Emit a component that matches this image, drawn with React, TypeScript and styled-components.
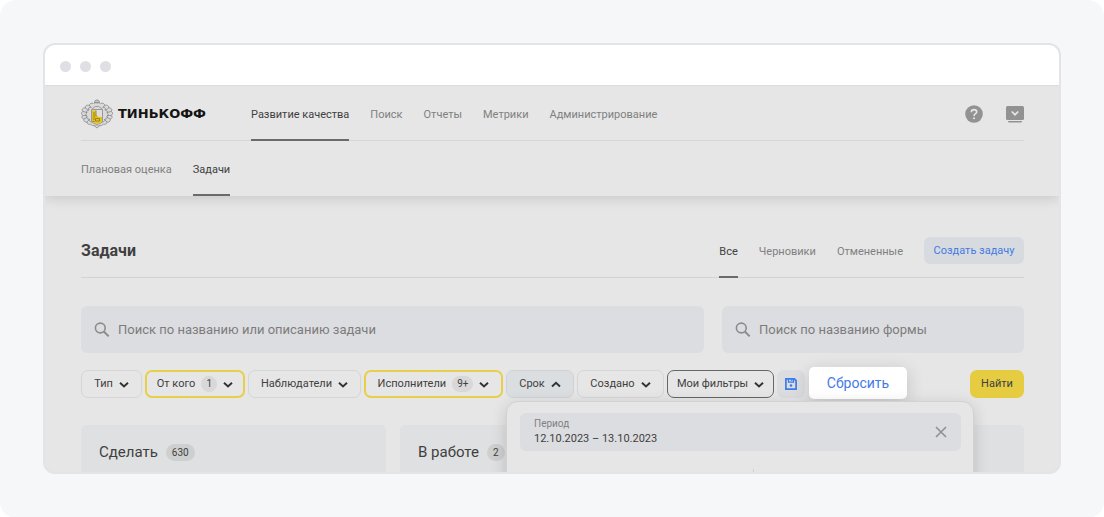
import React from "react";
import styled, { createGlobalStyle, css } from "styled-components";

const GlobalStyle = createGlobalStyle`
  *, *::before, *::after { box-sizing: border-box; }
  body {
    margin: 0;
    background: #fff;
    font-family: Roboto, "Liberation Sans", sans-serif;
    font-size: 11px;
    line-height: 16px;
    color: #404040;
  }
  button, input { font: inherit; color: inherit; }
  h1, h2 { margin: 0; }
`;

const Page = styled.div`
  min-height: 100vh;
  padding: 43px 43px 44px;
  background: #f6f7f9;
  border-radius: 16px;
`;

const Window = styled.div`
  border: 2px solid #e3e4e7;
  border-radius: 12px;
  background: #e6e6e6;
  overflow: hidden;
`;

const TitleBar = styled.div`
  position: relative;
  z-index: 1;
  display: flex;
  align-items: center;
  gap: 9px;
  height: 41px;
  padding: 2px 15px 0;
  background: #fff;
  border-bottom: 1px solid #dddde0;
`;

const Dot = styled.span`
  width: 11px;
  height: 11px;
  border-radius: 50%;
  background: #dfe0e5;
`;

const Header = styled.header`
  position: relative;
  padding: 0 35px 0 36px;
  box-shadow: 0 2px 12px rgba(0, 0, 0, 0.14);
`;

const TopRow = styled.div`
  display: flex;
  height: 55px;
  padding-top: 2px;
  border-bottom: 1px solid #d6d6d6;
`;

const Logo = styled.a`
  display: flex;
  align-items: center;
  gap: 5px;
  width: 170px;
  flex: none;
  color: #141414;
  font-family: "DejaVu Sans", sans-serif;
  font-size: 13px;
  font-weight: 700;
  text-decoration: none;
`;

const Nav = styled.nav`
  display: flex;
  gap: 21px;
  flex: 1;
`;

const SubNav = styled(Nav)`
  height: 55px;
`;

const NavLink = styled.a<{ $active?: boolean }>`
  display: flex;
  align-items: center;
  margin-bottom: -1px;
  border: solid transparent;
  border-width: 2px 0;
  color: #808080;
  text-decoration: none;
  white-space: nowrap;
  ${(p) => p.$active && css`
    color: #404040;
    border-bottom-color: #6a6a6a;
  `}
`;

const SubNavLink = styled(NavLink)`
  margin-bottom: 0;
  padding-top: 2px;
`;

const HeaderActions = styled.div`
  display: flex;
  align-items: center;
  gap: 23px;
`;

const IconButton = styled.button`
  display: flex;
  padding: 0;
  border: 0;
  background: none;
  color: #929292;
  cursor: pointer;
`;

const Content = styled.main`
  padding: 41px 35px 0 36px;
`;

const TitleRow = styled.div`
  display: flex;
  align-items: flex-start;
  gap: 21px;
  height: 41px;
  border-bottom: 1px solid #d3d3d3;
`;

const Title = styled.h1`
  flex: 1;
  font-size: 16px;
  font-weight: 700;
  line-height: 27px;
`;

const Tab = styled.a<{ $active?: boolean }>`
  padding: 0 0 10px;
  border-bottom: 2px solid ${(p) => (p.$active ? "#6a6a6a" : "transparent")};
  color: ${(p) => (p.$active ? "#404040" : "#808080")};
  line-height: 29px;
  text-decoration: none;
`;

const CreateButton = styled.button`
  width: 100px;
  height: 27px;
  padding: 0;
  border: 0;
  border-radius: 6px;
  background: #d7dbe0;
  color: #447ae2;
`;

const SearchRow = styled.div`
  display: grid;
  grid-template-columns: 623fr 302fr;
  gap: 18px;
  margin-top: 28px;
`;

const SearchBox = styled.label`
  display: flex;
  align-items: center;
  gap: 8px;
  height: 47px;
  padding: 0 13px;
  border-radius: 6px;
  background: #dcdde1;
  color: #8c8c8c;
`;

const SearchInput = styled.input`
  flex: 1;
  min-width: 0;
  padding: 0;
  border: 0;
  outline: 0;
  background: none;
  font-size: 13px;
  &::placeholder { color: #7c7c7c; opacity: 1; }
`;

const Filters = styled.div`
  display: flex;
  align-items: center;
  gap: 3px;
  height: 28px;
  margin-top: 17px;
`;

const FilterSlot = styled.div`
  position: relative;
`;

type Tone = "plain" | "selected" | "open" | "dark";

const FilterButton = styled.button<{ $tone?: Tone; $width: number }>`
  display: flex;
  align-items: center;
  justify-content: center;
  gap: 6px;
  min-width: ${(p) => p.$width}px;
  height: 28px;
  padding: 0 8px;
  border: 1px solid #d5d5d5;
  border-radius: 7px;
  background: transparent;
  white-space: nowrap;
  ${(p) => p.$tone === "selected" && css`border: 2px solid #e8cf4a;`}
  ${(p) => p.$tone === "open" && css`background: #dbdee0; border-color: #d0d3d5;`}
  ${(p) => p.$tone === "dark" && css`border-color: #666;`}
`;

const Count = styled.span`
  min-width: 16px;
  padding: 0 5px;
  border-radius: 8px;
  background: #d8d8d9;
  font-size: 10px;
`;

const SaveButton = styled.button`
  display: flex;
  align-items: center;
  justify-content: center;
  width: 28px;
  height: 28px;
  padding: 0;
  border: 0;
  border-radius: 7px;
  background: #dcdde1;
  color: #3b7bea;
`;

const ResetButton = styled.button`
  align-self: flex-start;
  width: 98px;
  height: 32px;
  margin: -3px 1px 0;
  padding: 0;
  border: 0;
  border-radius: 5px;
  background: #fff;
  box-shadow: 0 4px 18px rgba(0, 0, 0, 0.16);
  color: #447ae8;
  font-size: 14px;
`;

const FindButton = styled.button`
  width: 54px;
  height: 28px;
  margin-left: auto;
  padding: 0;
  border: 0;
  border-radius: 7px;
  background: #e6cc40;
`;

const Popover = styled.div`
  position: absolute;
  top: 31px;
  left: 0;
  z-index: 1;
  width: 468px;
  height: 120px;
  padding: 11px 12px 0 13px;
  border: 1px solid #d2d2d2;
  border-radius: 12px;
  background: #e6e6e6;
  box-shadow: 0 4px 16px rgba(0, 0, 0, 0.16);
`;

const Period = styled.div`
  display: flex;
  align-items: center;
  justify-content: space-between;
  height: 38px;
  padding: 0 14px;
  border-radius: 6px;
  background: #dcdde1;
`;

const PeriodField = styled.label`
  display: flex;
  flex-direction: column;
  color: #808080;
  font-size: 10px;
  line-height: 14px;
`;

const PeriodInput = styled.input`
  width: 160px;
  padding: 0;
  border: 0;
  outline: 0;
  background: none;
  color: #404040;
  font-size: 11px;
  line-height: 16px;
`;

const MonthDivider = styled.div`
  width: 1px;
  height: 40px;
  margin: 18px 207px 0 auto;
  background: #cfcfcf;
`;

const Board = styled.div`
  display: grid;
  grid-template-columns: repeat(3, 1fr);
  gap: 14px;
  margin-top: 27px;
`;

const Column = styled.section`
  display: flex;
  align-items: flex-start;
  gap: 8px;
  min-height: 47px;
  padding: 17px 18px 10px;
  border-radius: 5px 5px 0 0;
  background: #dfe0e1;
`;

const ColumnTitle = styled.h2`
  font-size: 15px;
  font-weight: 400;
  line-height: 20px;
`;

const ColumnCount = styled.span`
  margin-top: 2px;
  padding: 0 6px;
  border-radius: 9px;
  background: #cecfcf;
  font-size: 10px;
  line-height: 17px;
`;

const Crest = () => (
  <svg width="32" height="30" viewBox="0 0 32 30" fill="none" aria-hidden="true">
    <g stroke="#888" strokeWidth=".8">
      <path d="M13.500 7V3.500C13.500 2 14.500 1 16 1s2.500 1 2.500 2.500V7z" fill="#c4c4c4" />
      <path d="M13.500 3.500h5M13.500 5h5" />
      <path d="M12.500 4.500C10 3.500 8 5 8.500 6.500 6 5.500 3.500 7 4.500 9 2 8.500 0 10.500 2 12.500-.5 13 .5 16 2 16.500 0 17.500 1 20 3 20c-1 2 1 3.500 3 3 0 2 2 3 3.500 2 1 1.500 2.500 2 3.500 1.500h6c1 .5 2.500 0 3.500-1.500 1.500 1 3.500 0 3.500-2 2 .5 4-1 3-3 2 0 3-2.500 1-3.500 1.500-.5 2.500-3.500 0-4C32 10.500 30 8.500 27.500 9c1-2-1.500-3.500-4-2.500C24 5 22 3.500 19.500 4.500" fill="#dadada" />
      <path d="M10 8c-2 0-3 1.500-2 3-2 0-3 1.500-2 3-2 1-1 3 0 3-1 2 0 3 2 3 0 2 1 3 3 3M22 8c2 0 3 1.500 2 3 2 0 3 1.500 2 3 2 1 1 3 0 3 1 2 0 3-2 3 0 2-1 3-3 3" />
      <path d="M4.500 9l3 2.500M2 12.500l4 1M2 16.500h4M3 20l3.500-2M6 23l3-3M27.500 9l-3 2.500M30 12.500l-4 1M30 16.500h-4M29 20l-3.500-2M26 23l-3-3M8.500 6.500l2 2.500M23.500 6.500l-2 2.500" />
      <path d="M13 26.500 16 29l3-2.500M11.500 10C13 6.500 19 6.500 20.500 10" fill="#dadada" />
    </g>
    <path d="M10.500 10.500h11V22c0 2-3 2.500-5.500 3.500-2.500-1-5.500-1.500-5.500-3.500z" fill="#dedede" stroke="#888" strokeWidth=".8" />
    <path d="M11 11.500h4v4.500l3 2h3v4c0 1.500-2.500 2-5 2.800-2.500-.8-5-1.300-5-2.800z" fill="#e3c21f" />
    <path d="M13 13v8M15 11.500v6M14.500 19.500h4v2.500h-4zM11.500 22.500h2" stroke="#94811f" strokeWidth=".9" />
  </svg>
);

const SearchIcon = () => (
  <svg width="16" height="16" viewBox="0 0 16 16" fill="none" stroke="currentColor" aria-hidden="true">
    <circle cx="6.300" cy="6" r="4.900" strokeWidth="1.600" />
    <path d="m9.800 9.500 4.900 4.900" strokeWidth="2" />
  </svg>
);

const Chevron = ({ up }: { up?: boolean }) => (
  <svg width="10" height="8" viewBox="0 0 10 8" fill="none" stroke="#333" strokeWidth="1.900" aria-hidden="true">
    <path d={up ? "M1 6.500 5 2.700 9 6.500" : "M1 2.700 5 6.500 9 2.700"} />
  </svg>
);

const HelpIcon = () => (
  <svg width="18" height="18" viewBox="0 0 18 18" fill="none" aria-hidden="true">
    <circle cx="9" cy="9" r="8.800" fill="currentColor" />
    <path d="M6.300 7.200C6.300 5.500 7.400 4.600 9 4.600s2.700.9 2.700 2.300C11.700 8.700 9 8.800 9 11" stroke="#e6e6e6" strokeWidth="1.600" />
    <circle cx="9" cy="13.200" r="1" fill="#e6e6e6" />
  </svg>
);

const TrayIcon = () => (
  <svg width="18" height="18" viewBox="0 0 18 18" fill="none" aria-hidden="true">
    <rect x="0" y="1" width="18" height="14" rx="1.500" fill="currentColor" />
    <path d="M2 16h14c0 1-.6 1.500-1.500 1.500h-11C2.600 17.500 2 17 2 16z" fill="currentColor" />
    <path d="M5.700 6.500 9 9.700l3.300-3.200" stroke="#e6e6e6" strokeWidth="1.700" />
  </svg>
);

const SaveIcon = () => (
  <svg width="12" height="12" viewBox="0 0 12 12" fill="none" stroke="currentColor" strokeWidth="1.700" aria-hidden="true">
    <path d="M.9.9h8.500l1.700 1.700v8.500H.9z" />
    <path d="M3.500 1v3.200h5V1" strokeWidth="1.300" />
    <path d="M6.700 1v2" strokeWidth="1.100" />
    <circle cx="6" cy="7.500" r="1.300" fill="currentColor" stroke="none" />
  </svg>
);

const CloseIcon = () => (
  <svg width="12" height="12" viewBox="0 0 12 12" fill="none" stroke="currentColor" strokeWidth="1.700" aria-hidden="true">
    <path d="m1 1 10 10M11 1 1 11" />
  </svg>
);

interface FilterProps {
  label: string;
  width: number;
  count?: string;
  tone?: Tone;
}

const Filter = ({ label, width, count, tone }: FilterProps) => (
  <FilterButton type="button" $width={width} $tone={tone} aria-expanded={tone === "open"}>
    {label}
    {count && <Count>{count}</Count>}
    <Chevron up={tone === "open"} />
  </FilterButton>
);

export default function App() {
  return (
    <>
      <GlobalStyle />
      <Page>
        <Window>
          <TitleBar>
            <Dot />
            <Dot />
            <Dot />
          </TitleBar>
          <Header>
            <TopRow>
              <Logo href="#">
                <Crest />
                ТИНЬКОФФ
              </Logo>
              <Nav>
                <NavLink href="#" $active>Развитие качества</NavLink>
                <NavLink href="#">Поиск</NavLink>
                <NavLink href="#">Отчеты</NavLink>
                <NavLink href="#">Метрики</NavLink>
                <NavLink href="#">Администрирование</NavLink>
              </Nav>
              <HeaderActions>
                <IconButton type="button" aria-label="Помощь"><HelpIcon /></IconButton>
                <IconButton type="button" aria-label="Меню"><TrayIcon /></IconButton>
              </HeaderActions>
            </TopRow>
            <SubNav>
              <SubNavLink href="#">Плановая оценка</SubNavLink>
              <SubNavLink href="#" $active>Задачи</SubNavLink>
            </SubNav>
          </Header>
          <Content>
            <TitleRow>
              <Title>Задачи</Title>
              <Tab href="#" $active>Все</Tab>
              <Tab href="#">Черновики</Tab>
              <Tab href="#">Отмененные</Tab>
              <CreateButton type="button">Создать задачу</CreateButton>
            </TitleRow>
            <SearchRow>
              <SearchBox>
                <SearchIcon />
                <SearchInput placeholder="Поиск по названию или описанию задачи" />
              </SearchBox>
              <SearchBox>
                <SearchIcon />
                <SearchInput placeholder="Поиск по названию формы" />
              </SearchBox>
            </SearchRow>
            <Filters>
              <Filter label="Тип" width={61} />
              <Filter label="От кого" width={100} count="1" tone="selected" />
              <Filter label="Наблюдатели" width={113} />
              <Filter label="Исполнители" width={139} count="9+" tone="selected" />
              <FilterSlot>
                <Filter label="Срок" width={68} tone="open" />
                <Popover>
                  <Period>
                    <PeriodField>
                      Период
                      <PeriodInput defaultValue="12.10.2023 – 13.10.2023" />
                    </PeriodField>
                    <IconButton type="button" aria-label="Очистить"><CloseIcon /></IconButton>
                  </Period>
                  <MonthDivider />
                </Popover>
              </FilterSlot>
              <Filter label="Создано" width={87} />
              <Filter label="Мои фильтры" width={107} tone="dark" />
              <SaveButton type="button" aria-label="Сохранить фильтр"><SaveIcon /></SaveButton>
              <ResetButton type="button">Сбросить</ResetButton>
              <FindButton type="button">Найти</FindButton>
            </Filters>
            <Board>
              <Column>
                <ColumnTitle>Сделать</ColumnTitle>
                <ColumnCount>630</ColumnCount>
              </Column>
              <Column>
                <ColumnTitle>В работе</ColumnTitle>
                <ColumnCount>2</ColumnCount>
              </Column>
              <Column />
            </Board>
          </Content>
        </Window>
      </Page>
    </>
  );
}
